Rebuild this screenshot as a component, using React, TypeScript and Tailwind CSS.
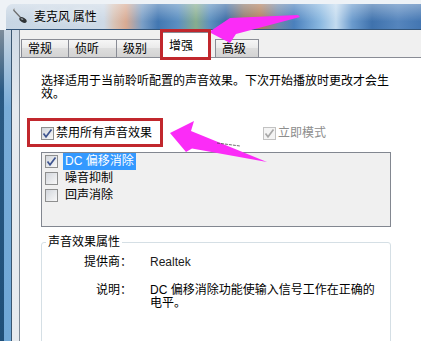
import React from 'react';

function CheckBox({ checked = false, disabled = false }: { checked?: boolean; disabled?: boolean }) {
  return (
    <span
      className={
        disabled
          ? 'flex h-[13px] w-[13px] shrink-0 items-center justify-center border border-[#c2c2c2] bg-[#f4f4f4]'
          : 'flex h-[13px] w-[13px] shrink-0 items-center justify-center border border-[#8e8f8f] bg-[linear-gradient(135deg,#d2d6dc,#f8f8f8)]'
      }
    >
      {checked && (
        <svg width="11" height="11" viewBox="0 0 11 11">
          <path
            d="M1.5 5.5 L4 8.8 L9.5 1.5"
            fill="none"
            stroke={disabled ? '#a8a8a8' : '#3f5590'}
            strokeWidth="1.7"
          />
        </svg>
      )}
    </span>
  );
}

function MicIcon() {
  return (
    <svg width="16" height="16" viewBox="0 0 16 16" className="shrink-0">
      <path d="M1.5 2 L8.5 9.5" stroke="#6b6b6b" strokeWidth="1.2" />
      <path d="M1 1.5 L3 1" stroke="#9a9a9a" strokeWidth="1" />
      <ellipse cx="11" cy="12" rx="4" ry="2.4" fill="#2f3336" transform="rotate(30 11 12)" />
      <ellipse cx="10" cy="11" rx="1.5" ry="0.8" fill="#8a9096" transform="rotate(30 10 11)" />
    </svg>
  );
}

function Tab({ label, className }: { label: string; className: string }) {
  return (
    <div
      className={
        'flex h-[18px] items-center border-t border-l border-[#898c95] bg-[linear-gradient(180deg,#f6f6f6,#ebebeb_45%,#dddddd_50%,#d3d3d3)] pl-[6px] pt-[1px] ' +
        className
      }
    >
      {label}
    </div>
  );
}

function LeftFrame() {
  return (
    <div className="flex w-[20px] shrink-0">
      <div className="w-[4px] bg-[linear-gradient(180deg,#7d8c9a,#2a5a84_20%,#1f4f78)]" />
      <div className="w-[7px] bg-[linear-gradient(180deg,#c9d5e1,#78acd8_25%,#6fa7d6)]" />
      <div className="w-[1px] bg-[#3a5670]" />
      <div className="w-[7px] bg-[linear-gradient(180deg,#d0dbe6,#e4e9ee_25%,#e7ebef)]" />
      <div className="w-[1px] bg-[#7f8a96]" />
    </div>
  );
}

export default function App() {
  return (
    <div className="relative flex h-[341px] w-[421px] flex-col overflow-hidden bg-[#eef2f6] font-['Liberation_Sans','Noto_Sans_CJK_SC',sans-serif] text-[12px] leading-[13px] text-black">
      {/* title bar */}
      <div className="h-[30px] shrink-0 pl-[6px] pt-[4px]">
        <div className="flex h-[26px] items-center rounded-tl-[7px] border-b border-[#33557a] bg-[linear-gradient(180deg,rgba(255,255,255,0.35),rgba(255,255,255,0)_70%),linear-gradient(90deg,#c8d6e4_0px,#cdd9e6_98px,#d8c3b6_108px,#d9aa92_120px,#7b9fc6_136px,#4277b2_152px,#5b8fc1_172px,#86ad8e_190px,#5d90bf_204px,#3b6ca6_220px,#8f7a6c_238px,#b17e5a_254px,#6d88a9_272px,#4a80bd_288px,#8ab8e0_314px,#c3dbef_330px,#6b9bcd_346px,#3f72ad_366px,#5585bd_392px,#4376b2_415px)] pb-[2px] pl-[6px]">
          <MicIcon />
          <span className="ml-[6px] font-['Noto_Sans_CJK_SC',sans-serif] text-[12px] [text-shadow:0_0_5px_rgba(255,255,255,0.9)]">
            麦克风 属性
          </span>
        </div>
      </div>

      <div className="flex min-h-0 flex-1">
        <LeftFrame />

        <div className="flex min-w-0 flex-1 flex-col">
          {/* tab strip */}
          <div className="flex h-[27px] shrink-0 items-end bg-[#f0f0f0] pl-[1px]">
            <Tab label="常规" className="w-[47px]" />
            <Tab label="侦听" className="w-[48px]" />
            <Tab label="级别" className="w-[44px]" />
            <div className="relative z-10 -mb-[3px] h-[31px] w-[51px] border-[3px] border-[#c1272d] bg-white">
              <div className="h-full border-t border-[#898c95] pl-[6px] pt-[7px]">增强</div>
            </div>
            <Tab label="高级" className="ml-[4px] w-[44px] border-r" />
          </div>

          {/* panel */}
          <div className="flex-1 border-t border-[#898c95] bg-white pl-[21px] pt-[17px]">
            <p className="whitespace-nowrap">
              选择适用于当前聆听配置的声音效果。下次开始播放时更改才会生
              <br />
              效。
            </p>

            <div className="-ml-[14px] mt-[17px] flex items-center">
              <div className="flex h-[29px] w-[136px] items-center gap-[2px] border-[3px] border-[#c1272d] pl-[11px] pt-[2px]">
                <CheckBox checked />
                <span>禁用所有声音效果</span>
              </div>
              <div className="ml-[100px] flex items-center gap-[2px] pt-[2px] text-[#8d8d8d]">
                <CheckBox checked disabled />
                <span>立即模式</span>
              </div>
            </div>

            <div className="mt-[5px] h-[75px] w-[350px] border border-[#828790] bg-[#f0f0f0] pl-[3px]">
              <div className="flex h-[17px] items-center">
                <CheckBox checked />
                <span className="ml-[5px] flex h-[17px] items-center bg-[#3399ff] px-[2px] text-white">DC 偏移消除</span>
              </div>
              <div className="flex h-[17px] items-center">
                <CheckBox />
                <span className="ml-[7px]">噪音抑制</span>
              </div>
              <div className="flex h-[17px] items-center">
                <CheckBox />
                <span className="ml-[7px]">回声消除</span>
              </div>
            </div>

            <fieldset className="mt-[9px] h-[120px] w-[350px] rounded-[3px] border border-[#d5dfe5] pl-[4px]">
              <legend className="px-[2px]">声音效果属性</legend>
              <div className="grid grid-cols-[86px_1fr] gap-x-[18px] gap-y-[15px] pt-[7px]">
                <span className="text-right">提供商：</span>
                <span className="text-[#1a1a1a]">Realtek</span>
                <span className="text-right">说明：</span>
                <span className="whitespace-nowrap">
                  DC 偏移消除功能使输入信号工作在正确的
                  <br />
                  电平。
                </span>
              </div>
            </fieldset>
          </div>
        </div>
      </div>

      {/* annotation arrows */}
      <svg className="pointer-events-none absolute left-[205px] top-[10px]" width="100" height="42" viewBox="205 10 100 42">
        <polygon points="209,32 230,18 298,15 300,17 236,34 230,43" fill="#fb2cf7" />
      </svg>
      <svg className="pointer-events-none absolute left-[165px] top-[115px]" width="110" height="52" viewBox="165 115 110 52">
        <polygon points="170,133 194,121 191,131 267,162 192,148.5 186,152" fill="#fb2cf7" />
        <path d="M217 143 L240 146" stroke="#4a4a4a" strokeWidth="0.8" strokeDasharray="3 1" />
      </svg>
    </div>
  );
}
